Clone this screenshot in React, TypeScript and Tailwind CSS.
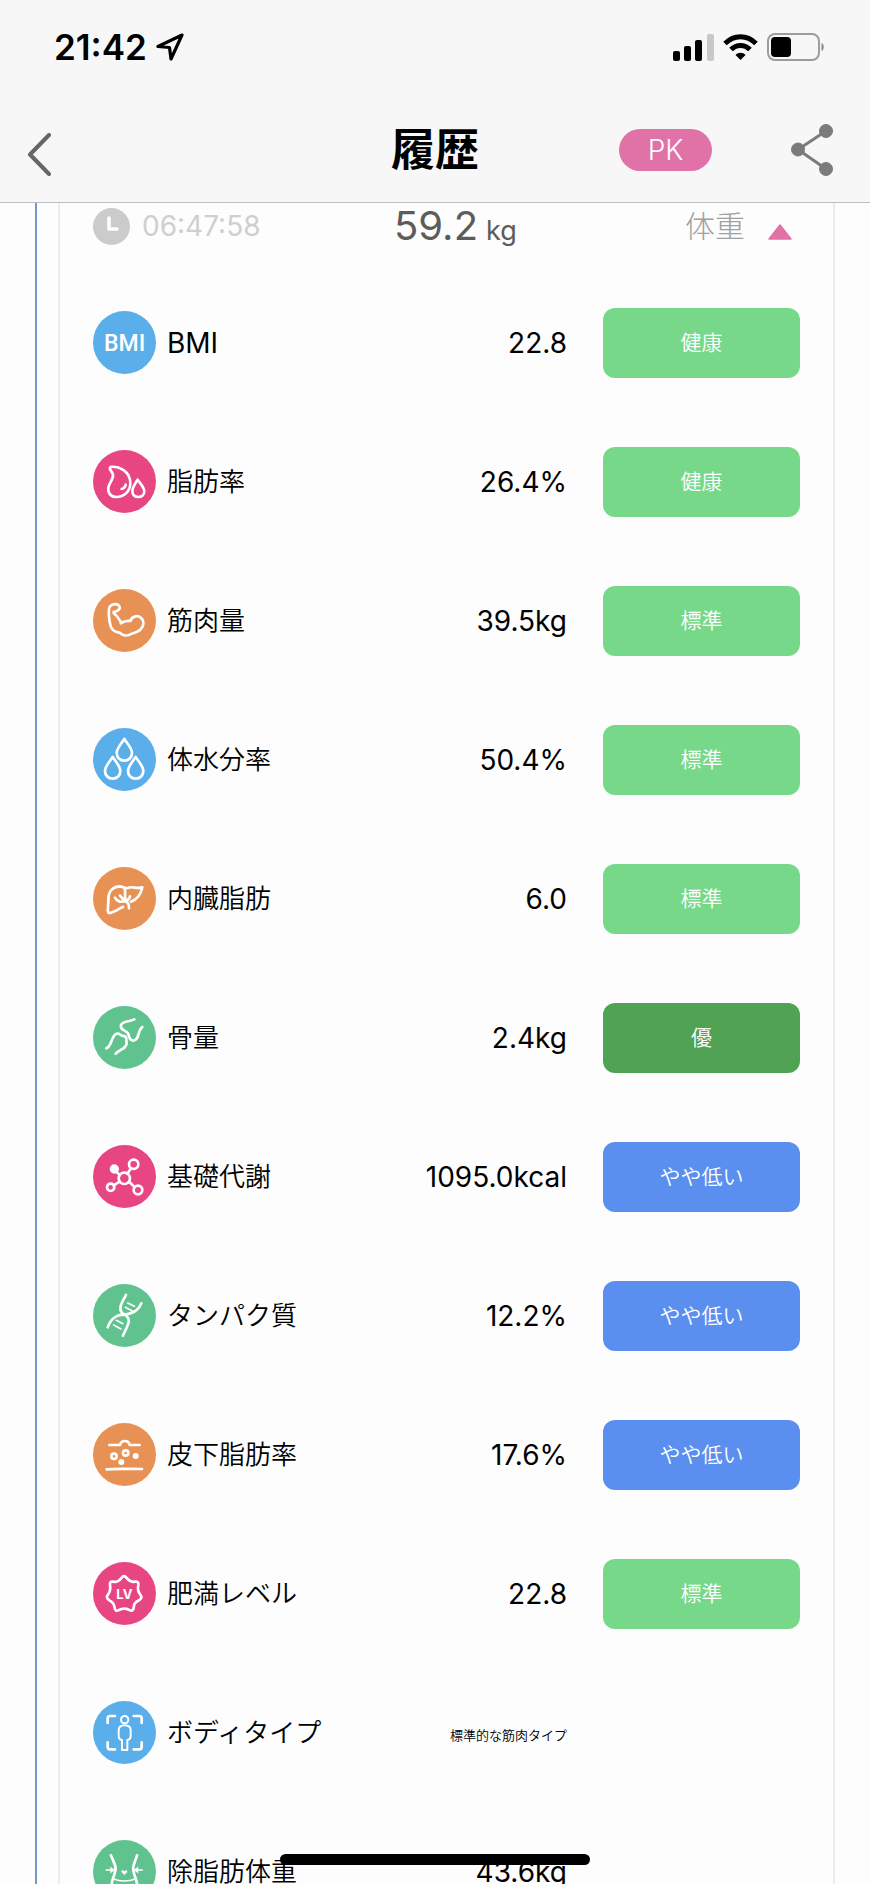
import { useState } from 'react';
import type { ReactNode } from 'react';

type Level = 'standard' | 'excellent' | 'low';

interface Metric {
  name: string;
  value: string;
  icon: ReactNode;
  color: string;
  status?: string;
  level?: Level;
  latin?: boolean;
  small?: boolean;
}

const LEVEL_CLS: Record<Level, string> = {
  standard: 'bg-[#78d88a]',
  excellent: 'bg-[#4fa352]',
  low: 'bg-[#5b8fef]',
};

const BLUE = 'text-[#5aaeea]';
const PINK = 'text-[#e84583]';
const ORANGE = 'text-[#e89155]';
const GREEN = 'text-[#60c38f]';

const DROP = 'M0 0C7 12 23 27 23 42C23 55 13 65 0 65C-13 65 -23 55 -23 42C-23 27 -7 12 0 0Z';

const BmiIcon = (
  <text
    x="95"
    y="119"
    textAnchor="middle"
    fontSize="69"
    fontWeight="500"
    fill="#fff"
    stroke="none"
    fontFamily="Roboto, sans-serif"
  >
    BMI
  </text>
);

const FatIcon = (
  <>
    <path d="M52 51C75 47 112 62 112 100C112 125 92 141 70 141C54 141 44 130 46 114C48 98 62 88 60 74C58 64 46 58 52 51Z" />
    <path d="M98 104C97 110 92 115 86 117" />
    <path d="M134 89C140 99 154 112 154 124C154 134 146 141 136 141C125 141 118 134 118 124C118 112 128 99 134 89Z" />
  </>
);

const MuscleIcon = (
  <path d="M62 69C70 68 82 62 80 54C76 44 60 42 51 52C45 60 47 96 54 114C59 126 68 130 80 131C90 140 104 142 114 135C128 131 151 122 151 104C152 88 138 80 128 82C118 84 114 90 112 96C102 95 94 95 83 103M85 100C78 94 76 84 68 78C64 74 60 72 62 69" />
);

const WaterIcon = (
  <>
    <path d={DROP} transform="translate(94 33)" />
    <path d={DROP} transform="translate(59 87)" />
    <path d={DROP} transform="translate(128 87)" />
  </>
);

const LiverIcon = (
  <>
    <path d="M90 120C74 126 62 138 47 138C41 134 47 118 46 96C46 72 60 59 80 58C90 58 92 65 104 63C120 56 130 67 148 61C144 80 132 98 114 104" />
    <path d="M95 65C99 76 93 84 98 98M66 92C74 104 84 106 94 103M81 86C87 94 92 97 98 104M111 88C110 96 104 100 98 103C106 106 108 114 108 124" />
  </>
);

const BoneIcon = (
  <>
    <path d="M124 40C108 48 90 45 84 57C80 73 98 72 105 82C110 92 107 103 121 104C140 102 132 76 148 63" />
    <path d="M40 127C58 120 54 88 71 83C80 80 84 92 94 90C104 92 98 100 101 110C102 128 80 130 68 143" />
  </>
);

const MetabolismIcon = (
  <>
    <circle cx="94" cy="100" r="17" />
    <circle cx="122" cy="58" r="14" />
    <circle cx="53" cy="127" r="11" />
    <circle cx="135" cy="135" r="13" />
    <circle cx="64" cy="72" r="10" fill="#fff" />
    <path d="M103 86L114 70M80 110L62 121M108 110L125 126M68 78L80 90" />
  </>
);

const ProteinIcon = (
  <>
    <path d="M99 33C88 54 70 78 94 92C122 106 98 132 90 155" />
    <path d="M145 58C134 84 116 88 94 92C68 92 54 104 44 130" />
    <path d="M104 57L124 67M97 70L118 81M70 109L90 119M62 123L84 135" strokeWidth="5" />
  </>
);

const SubcutaneousIcon = (
  <>
    <path d="M49 66H81C85 50 107 50 110 66H140M41 139C70 136 112 138 147 138" />
    <circle cx="63" cy="100" r="8" />
    <circle cx="98" cy="90" r="8" />
    <circle cx="128" cy="99" r="5" fill="#fff" />
    <circle cx="85" cy="117" r="5" fill="#fff" />
  </>
);

const LevelIcon = (
  <>
    <path d="M86 47Q93 38 100 47Q112 62 127 59Q138 58 136 69Q132 86 142 98Q150 107 138 115Q122 122 122 138Q120 150 109 144Q93 136 78 144Q66 150 65 138Q64 122 49 115Q37 107 45 98Q54 86 51 69Q49 58 60 59Q75 62 86 47Z" />
    <text
      x="94"
      y="110"
      textAnchor="middle"
      fontSize="39"
      fontWeight="700"
      fill="#fff"
      stroke="none"
      fontFamily="Inter, sans-serif"
    >
      LV
    </text>
  </>
);

const BodyIcon = (
  <>
    <path d="M44 66V52Q44 45 51 45H66M122 45H139Q146 45 146 52V66M44 124V138Q44 145 51 145H66M122 145H139Q146 145 146 138V124" />
    <circle cx="95" cy="56" r="11" strokeWidth="6" />
    <path
      d="M87 147V117C80 116 77 110 77 104V88C77 78 84 73 95 73C106 73 113 78 113 88V104C113 110 110 116 103 117V147Z"
      strokeWidth="6"
    />
  </>
);

const WaistIcon = (
  <>
    <path d="M54 46C62 68 72 78 66 96C63 110 56 120 54 144M132 46C126 68 116 78 122 96C125 110 132 120 134 144" />
    <path d="M62 117C80 125 108 125 126 117M40 90H56M148 90H132" strokeWidth="5" />
    <path
      d="M53 81L65 90L53 99ZM135 81L123 90L135 99ZM94 104L86 96C84 90 92 90 94 95C96 90 104 90 102 96Z"
      fill="#fff"
      strokeWidth="1"
    />
  </>
);

const METRICS: Metric[] = [
  { name: 'BMI', value: '22.8', icon: BmiIcon, color: BLUE, status: '健康', level: 'standard', latin: true },
  { name: '脂肪率', value: '26.4%', icon: FatIcon, color: PINK, status: '健康', level: 'standard' },
  { name: '筋肉量', value: '39.5kg', icon: MuscleIcon, color: ORANGE, status: '標準', level: 'standard' },
  { name: '体水分率', value: '50.4%', icon: WaterIcon, color: BLUE, status: '標準', level: 'standard' },
  { name: '内臓脂肪', value: '6.0', icon: LiverIcon, color: ORANGE, status: '標準', level: 'standard' },
  { name: '骨量', value: '2.4kg', icon: BoneIcon, color: GREEN, status: '優', level: 'excellent' },
  { name: '基礎代謝', value: '1095.0kcal', icon: MetabolismIcon, color: PINK, status: 'やや低い', level: 'low' },
  { name: 'タンパク質', value: '12.2%', icon: ProteinIcon, color: GREEN, status: 'やや低い', level: 'low' },
  { name: '皮下脂肪率', value: '17.6%', icon: SubcutaneousIcon, color: ORANGE, status: 'やや低い', level: 'low' },
  { name: '肥満レベル', value: '22.8', icon: LevelIcon, color: PINK, status: '標準', level: 'standard' },
  { name: 'ボディタイプ', value: '標準的な筋肉タイプ', icon: BodyIcon, color: BLUE, small: true },
  { name: '除脂肪体重', value: '43.6kg', icon: WaistIcon, color: GREEN },
];

function StatusBar() {
  return (
    <div className="flex h-[94px] items-center justify-between pr-[45px] pl-[54px]">
      <div className="flex items-center gap-[9px]">
        <span className="text-[35px] leading-none font-semibold">21:42</span>
        <svg width="28" height="28" viewBox="0 0 28 28" fill="none" stroke="#000" strokeWidth="3.2" strokeLinejoin="round">
          <path d="M26 2L2 13.5L13.5 14.5L15 26Z" />
        </svg>
      </div>
      <div className="flex items-center gap-[9px]">
        <svg width="41" height="27" viewBox="0 0 41 27">
          <rect x="0" y="17" width="7" height="10" rx="2" />
          <rect x="11" y="12" width="7" height="15" rx="2" />
          <rect x="22" y="6" width="7" height="21" rx="2" />
          <rect x="34" y="0" width="7" height="27" rx="2" fill="#c8c8c8" />
        </svg>
        <svg width="35" height="27" viewBox="0 0 35 27" fill="none" stroke="#000" strokeWidth="5">
          <path d="M2 9.5C11 0.5 24 0.5 33 9.5" />
          <path d="M8 15.5C13.5 10 21.5 10 27 15.5" />
          <path d="M17.5 26L12.5 21C15 18 20 18 22.5 21Z" fill="#000" stroke="none" />
        </svg>
        <svg width="58" height="28" viewBox="0 0 58 28">
          <rect x="1" y="1" width="51" height="26" rx="7" fill="none" stroke="#9c9c9c" strokeWidth="2" />
          <rect x="4" y="4" width="20" height="20" rx="4" />
          <path d="M54.5 10C57.5 11 57.5 17 54.5 18Z" fill="#8a8a8a" />
        </svg>
      </div>
    </div>
  );
}

function NavBar() {
  return (
    <div className="grid h-[108px] grid-cols-[1fr_auto_1fr] items-center px-[37px]">
      <button aria-label="戻る" className="-ml-3 w-fit pt-3">
        <svg width="27" height="43" viewBox="0 0 27 43" fill="none" stroke="#666" strokeWidth="4" strokeLinecap="round" strokeLinejoin="round">
          <path d="M24 2L5 21.5L24 41" />
        </svg>
      </button>
      <h1 className="pt-1 text-[44px] leading-none font-bold">履歴</h1>
      <div className="flex items-center justify-end gap-[79px] pt-1">
        <button className="h-[42px] w-[93px] rounded-full bg-[#e172a8] text-[28px] leading-none font-light text-white">
          PK
        </button>
        <button aria-label="共有">
          <svg width="42" height="52" viewBox="0 0 42 52" fill="#7b7b7b" stroke="#7b7b7b">
            <path d="M35 7L7 25.5L35 45" fill="none" strokeWidth="3" />
            <circle cx="35" cy="7" r="6.5" />
            <circle cx="7" cy="25.5" r="6.5" />
            <circle cx="35" cy="45" r="6.5" />
          </svg>
        </button>
      </div>
    </div>
  );
}

function MetricRow({ metric }: { metric: Metric }) {
  return (
    <tr className="h-[139px]">
      <th scope="row" className="p-0 text-left font-[350]">
        <span className="flex items-center gap-[11px]">
          <svg
            className={`size-[63px] shrink-0 ${metric.color}`}
            viewBox="0 0 189 189"
            fill="none"
            stroke="#fff"
            strokeWidth="8"
            strokeLinecap="round"
            strokeLinejoin="round"
          >
            <circle cx="94.5" cy="94.5" r="94.5" fill="currentColor" stroke="none" />
            {metric.icon}
          </svg>
          <span className={`leading-9 whitespace-nowrap ${metric.latin ? 'text-[28px] font-normal' : 'text-[26px]'}`}>
            {metric.name}
          </span>
        </span>
      </th>
      <td className="p-0 text-right text-[28px] leading-9 whitespace-nowrap">
        <span className={metric.small ? 'text-[13px] font-[350]' : ''}>{metric.value}</span>
      </td>
      <td className="w-[233px] p-0 pl-9">
        {metric.level && (
          <span
            className={`flex h-[70px] items-center justify-center rounded-xl text-[21px] font-[350] text-white ${LEVEL_CLS[metric.level]}`}
          >
            {metric.status}
          </span>
        )}
      </td>
    </tr>
  );
}

export default function App() {
  const [open, setOpen] = useState(true);

  return (
    <div className="flex h-screen flex-col overflow-hidden bg-[#fdfdfd] font-[Inter,'Noto_Sans_CJK_JP',sans-serif] text-black">
      <header className="shrink-0 border-b border-[#bdbdbd] bg-[#f7f7f7]">
        <StatusBar />
        <NavBar />
      </header>

      <main className="flex min-h-0 flex-1 overflow-y-auto px-[35px] [scrollbar-width:none]">
        {/* タイムライン */}
        <div className="mr-[21px] h-[1720px] w-0.5 shrink-0 bg-[#7598cc]" />

        <section className="h-fit min-w-0 flex-1 border-x-2 border-[#ececec] px-[33px]">
          <button
            onClick={() => setOpen(!open)}
            aria-expanded={open}
            className="mb-6 grid h-[46px] w-full grid-cols-[301px_1fr_auto] items-center pr-2 text-left"
          >
            <span className="flex items-center gap-3 text-[28px] leading-none text-[#cfcfcf]">
              <svg width="37" height="37" viewBox="0 0 37 37" fill="none">
                <circle cx="18.5" cy="18.5" r="18.5" fill="#cbcbcb" />
                <path d="M16 10V21H24" stroke="#fff" strokeWidth="3.5" strokeLinecap="round" strokeLinejoin="round" />
              </svg>
              06:47:58
            </span>
            <span className="flex items-baseline gap-2 text-[#5c5c5c]">
              <span className="text-[40px] leading-none">59.2</span>
              <span className="text-[27px] leading-none">kg</span>
            </span>
            <span className="flex items-center gap-[23px] text-[30px] leading-none font-light text-[#a0a0a0]">
              体重
              <svg className={open ? 'mt-3' : 'mt-3 rotate-180'} width="24" height="16" viewBox="0 0 24 16">
                <path d="M12 1L23 15H1Z" fill="#e172a8" stroke="#e172a8" strokeWidth="1.5" strokeLinejoin="round" />
              </svg>
            </span>
          </button>

          {open && (
            <table className="w-full border-collapse">
              <tbody>
                {METRICS.map((m) => (
                  <MetricRow key={m.name} metric={m} />
                ))}
              </tbody>
            </table>
          )}
        </section>
      </main>

      {/* ホームインジケーター */}
      <div className="fixed bottom-[19px] left-1/2 h-[11px] w-[310px] -translate-x-1/2 rounded-full bg-black" />
    </div>
  );
}
